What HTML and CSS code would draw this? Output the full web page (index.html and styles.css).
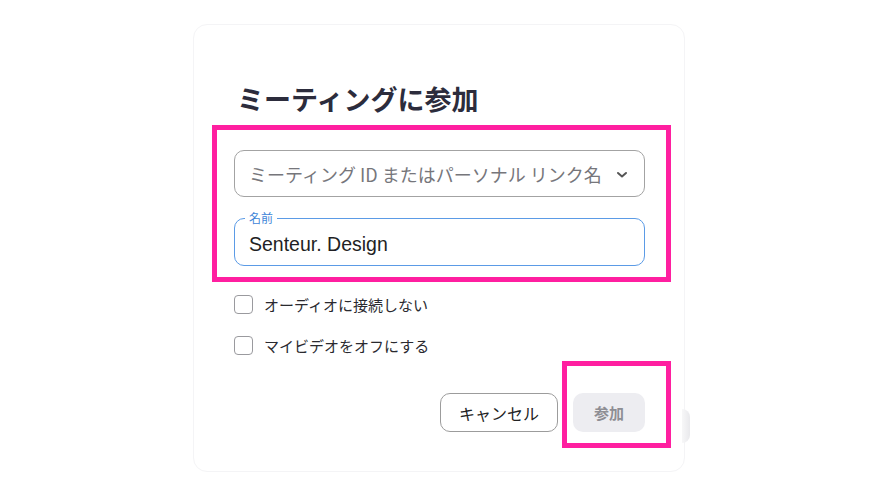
FILE: index.html
```html
<!DOCTYPE html>
<html lang="ja">
<head>
<meta charset="utf-8">
<link rel="stylesheet" href="styles.css">
</head>
<body>
<div class="card">
  <h1 class="title">ミーティングに参加</h1>
  <div class="fields">
    <div class="select">
      <span class="placeholder">ミーティング ID またはパーソナル リンク名</span>
      <svg class="chev" width="12" height="8" viewBox="0 0 12 8"><path d="M2 2 L6 5.5 L10 2" fill="none" stroke="#555" stroke-width="2" stroke-linecap="round" stroke-linejoin="round"/></svg>
    </div>
    <div class="input">
      <span class="label">名前</span>
      <span class="value">Senteur. Design</span>
    </div>
  </div>
  <div class="options">
    <label class="opt"><span class="box"></span>オーディオに接続しない</label>
    <label class="opt"><span class="box"></span>マイビデオをオフにする</label>
  </div>
  <div class="actions">
    <button class="btn cancel">キャンセル</button>
    <button class="btn join">参加</button>
  </div>
  <div class="mark mark-fields"></div>
  <div class="mark mark-join"></div>
  <div class="edge"></div>
</div>
</body>
</html>
```
FILE: styles.css
```css
* { box-sizing: border-box; }
html, body { margin: 0; padding: 0; background: #fff; }
body {
  width: 883px;
  height: 497px;
  padding: 24px 0 0 193px;
  font-family: "Noto Sans CJK JP", "Noto Sans", sans-serif;
  overflow: hidden;
}
.card {
  position: relative;
  width: 492px;
  height: 448px;
  border: 1px solid #f4f4f6;
  border-radius: 14px;
  background: #fff;
  padding: 0 39px 0 40px;
  display: flex;
  flex-direction: column;
}
.title {
  margin: 56px 0 0 3px;
  font-size: 27px;
  line-height: 36px;
  font-weight: 700;
  color: #2c2c3c;
  letter-spacing: 0;
}
.fields {
  margin-top: 33px;
  display: flex;
  flex-direction: column;
  gap: 21px;
}
.select {
  height: 47px;
  border: 1px solid #a3a3a3;
  border-radius: 10px;
  display: flex;
  align-items: center;
  justify-content: space-between;
  padding: 0 16px 0 14px;
}
.placeholder {
  font-size: 18px;
  color: #76767b;
  white-space: nowrap;
}
.chev { display: block; margin-top: 2px; }
.input {
  position: relative;
  height: 48px;
  border: 1.5px solid #5b9be6;
  border-radius: 10px;
  display: flex;
  align-items: center;
  padding: 4px 14px 0 14px;
}
.label {
  position: absolute;
  top: -9px;
  left: 10px;
  padding: 0 4px;
  background: #fff;
  font-size: 12px;
  line-height: 16px;
  color: #3f86d8;
}
.value {
  font-family: "Liberation Sans", "Noto Sans CJK JP", sans-serif;
  font-size: 19.5px;
  color: #1f1f24;
}
.options {
  margin-top: 27px;
  display: flex;
  flex-direction: column;
  gap: 19px;
}
.opt {
  display: flex;
  align-items: center;
  gap: 11px;
  height: 22px;
  font-size: 15px;
  color: #2a2a2f;
}
.box {
  width: 19px;
  height: 19px;
  border: 1.5px solid #9a9a9e;
  border-radius: 4px;
  background: #fff;
  flex: none;
}
.actions {
  margin-top: 37px;
  display: flex;
  justify-content: flex-end;
  gap: 15px;
}
.btn {
  height: 39px;
  border-radius: 10px;
  font-family: "Noto Sans CJK JP", sans-serif;
  font-size: 16px;
  padding: 0;
}
.cancel {
  width: 118px;
  border: 1px solid #9c9c9c;
  background: #fff;
  color: #222;
}
.join {
  width: 72px;
  border: none;
  background: #ededf1;
  color: #8e8e94;
  font-weight: 700;
  font-size: 15px;
}
.mark {
  position: absolute;
  border: 5px solid #ff1fa0;
  pointer-events: none;
}
.mark-fields {
  left: 18px;
  top: 100px;
  width: 459px;
  height: 157px;
}
.mark-join {
  left: 368px;
  top: 336px;
  width: 109px;
  height: 87px;
}
.edge {
  position: absolute;
  right: -6px;
  top: 384px;
  width: 8px;
  height: 34px;
  border-radius: 0 10px 10px 0;
  background: linear-gradient(90deg, #f7f7f8, #e9e9ec);
}
```
